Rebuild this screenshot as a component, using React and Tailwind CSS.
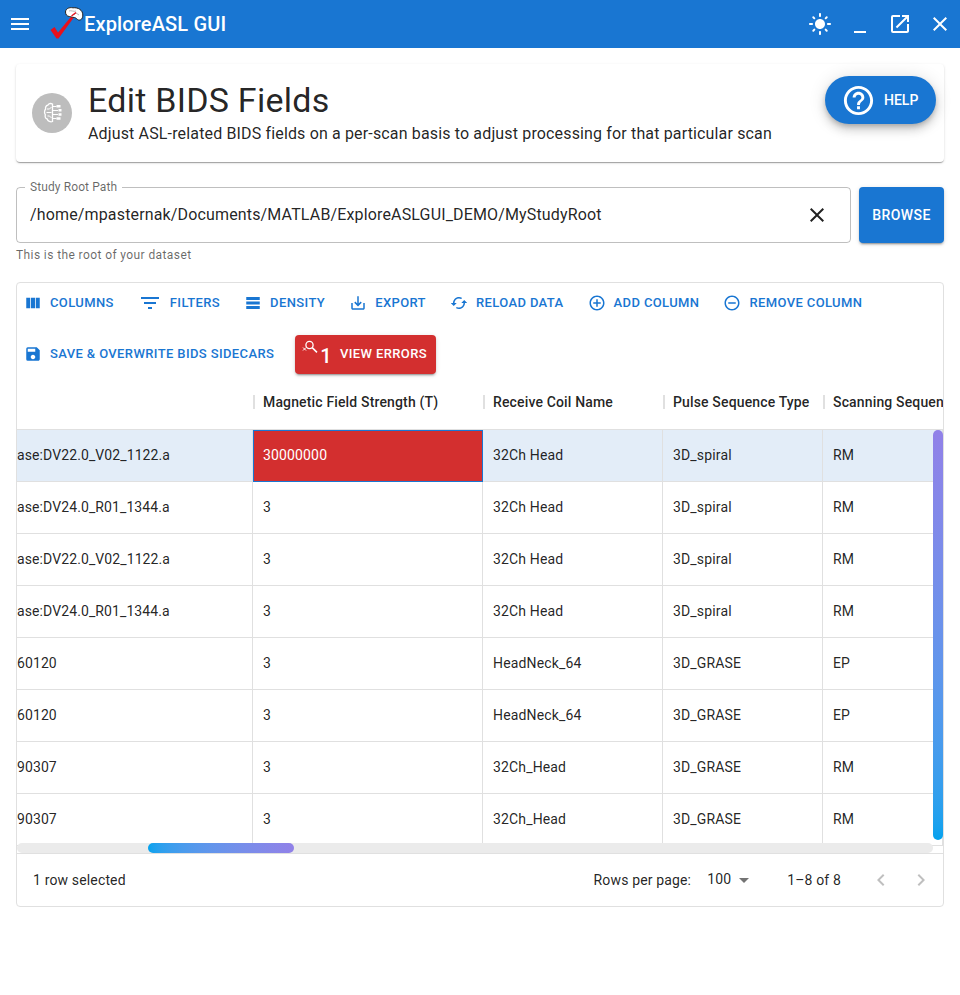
import React from "react";
import {
  MdMenu, MdLightMode, MdMinimize, MdOpenInNew, MdClose, MdHelpOutline, MdViewColumn, MdFilterList,
  MdTableRows, MdSaveAlt, MdCached, MdAddCircleOutline, MdRemoveCircleOutline, MdSave,
  MdArrowDropDown, MdChevronLeft, MdChevronRight,
} from "react-icons/md";

const rows = [
  ["ase:DV22.0_V02_1122.a", "30000000", "32Ch Head", "3D_spiral", "RM"],
  ["ase:DV24.0_R01_1344.a", "3", "32Ch Head", "3D_spiral", "RM"],
  ["ase:DV22.0_V02_1122.a", "3", "32Ch Head", "3D_spiral", "RM"],
  ["ase:DV24.0_R01_1344.a", "3", "32Ch Head", "3D_spiral", "RM"],
  ["60120", "3", "HeadNeck_64", "3D_GRASE", "EP"],
  ["60120", "3", "HeadNeck_64", "3D_GRASE", "EP"],
  ["90307", "3", "32Ch_Head", "3D_GRASE", "RM"],
  ["90307", "3", "32Ch_Head", "3D_GRASE", "RM"],
];

const headers = ["Magnetic Field Strength (T)", "Receive Coil Name", "Pulse Sequence Type", "Scanning Sequence"];

const gridCols = "grid grid-cols-[236px_230px_180px_160px_120px]";

function Logo() {
  return (
    <svg width="34" height="34" viewBox="0 0 34 34" className="ml-[18px] mt-[-2px] shrink-0">
      <path d="M0.5 24 L4.5 21 L8 26.5 L22 9.5 L24.5 10.5 L8.5 32.5 L6.5 32.5 Z" fill="#e8101c" />
      <path d="M15.5 6 C15.5 2.8 19 1 23 1.8 C28 1.2 32.8 4 32.8 9 C32.8 12.5 31 14.5 28.5 14 C27 13.5 26.5 12 24.5 11.5 C22 11.5 21 10.5 19.5 10.5 C17 10.5 15.5 8.5 15.5 6 Z" fill="#fff" stroke="#222" strokeWidth="1" />
      <path d="M19 5 C21 4 24 6 26 5 M24 9 L26 7 L29 9" fill="none" stroke="#999" strokeWidth="0.7" />
      <path d="M21.5 10 L26 6.5" stroke="#e8101c" strokeWidth="1.3" />
    </svg>
  );
}

function BrainIcon() {
  return (
    <svg width="24" height="24" viewBox="0 0 24 24" fill="none" className="ml-[1px]">
      <path d="M11.5 3 C9.5 2 7.5 2.5 6.8 4.2 C5 4.6 4.2 6.4 4.6 8 C3.2 9.6 3.2 12.4 4.4 13.8 C3.6 15.6 4.6 17.6 6.2 18 C6.8 20.2 9.5 21.4 11.5 20.5 Z" stroke="#fff" strokeWidth="1.3" />
      <path d="M6 8 H8.5 L10.5 6 M5.5 11.5 H10.5 M6.5 15 H8.5 L10.5 17" stroke="#fff" strokeWidth="1" />
      <path d="M11 5.5 H15.5 M11 9.5 H17 M11 13.5 H17 M11 17.5 H15.5" stroke="#fff" strokeWidth="1" />
      <path d="M15.5 4 h4 v2.6 h-4 z M17.5 8 h3 v2.6 h-3 z M17.5 12.2 h3 v2.6 h-3 z M15.5 16.2 h4 v2.6 h-4 z" fill="#fff" />
    </svg>
  );
}

function SearchErrorIcon() {
  return (
    <svg width="16" height="14" viewBox="0 0 16 14" fill="none" stroke="#fff" className="mt-[-15px] ml-[-1px] shrink-0">
      <circle cx="7.5" cy="5" r="3.6" strokeWidth="1.3" />
      <path d="M10.2 7.6 L15 12.4" strokeWidth="1.5" />
      <path d="M1 7.5 L4 10.5 M4 7.5 L1 10.5" strokeWidth="1" />
    </svg>
  );
}

function ToolButton({ icon, children, className = "" }) {
  return (
    <button className={`flex h-[30px] items-center gap-2 text-[13px] font-medium uppercase tracking-[0.38px] text-[#1976d2] ${className}`}>
      {icon}
      <span>{children}</span>
    </button>
  );
}

function Cell({ children, error }) {
  return (
    <div className={`flex h-[52px] items-center overflow-hidden whitespace-nowrap pb-[2px] text-sm tracking-[0.15px] ${error ? "border border-[#1976d2] bg-[#d32f2f] px-[9px] text-white" : "border-b border-r border-[#e0e0e0] px-[10px] text-black/[.87]"}`}>
      {children}
    </div>
  );
}

export default function App() {
  return (
    <div className="min-h-[995px] bg-white font-['Roboto',sans-serif] text-black/[.87]">
      <header className="flex h-12 items-center bg-[#1976d2] text-white">
        <button className="ml-2 flex h-6 w-6 items-center justify-center"><MdMenu size={24} /></button>
        <Logo />
        <h1 className="text-xl font-medium tracking-[0.15px]">ExploreASL GUI</h1>
        <div className="ml-auto flex">
          <button className="flex h-10 w-10 items-center justify-center"><MdLightMode size={24} /></button>
          <button className="flex h-10 w-10 items-center justify-center"><MdMinimize size={24} /></button>
          <button className="flex h-10 w-10 items-center justify-center"><MdOpenInNew size={24} /></button>
          <button className="flex h-10 w-10 items-center justify-center"><MdClose size={24} /></button>
        </div>
      </header>

      <main className="px-4 pt-4">
        <section className="relative flex h-[98px] items-center rounded bg-white pl-4 shadow-[0_2px_1px_-1px_rgba(0,0,0,0.2),0_1px_1px_0_rgba(0,0,0,0.14),0_1px_3px_0_rgba(0,0,0,0.12)]">
          <div className="flex h-10 w-10 items-center justify-center rounded-full bg-[#bdbdbd]"><BrainIcon /></div>
          <div className="ml-4">
            <h2 className="mb-[2px] text-[34px] leading-[40px] tracking-[0.25px]">Edit BIDS Fields</h2>
            <p className="text-base leading-[24px] tracking-[0.15px]">Adjust ASL-related BIDS fields on a per-scan basis to adjust processing for that particular scan</p>
          </div>
          <button className="absolute right-2 top-3 flex h-12 w-[111px] items-center gap-2 rounded-full bg-[#1976d2] pl-4 text-sm font-medium text-white shadow-[0_3px_5px_-1px_rgba(0,0,0,0.2),0_6px_10px_0_rgba(0,0,0,0.14),0_1px_18px_0_rgba(0,0,0,0.12)]">
            <MdHelpOutline size={35} />
            HELP
          </button>
        </section>

        <div className="mt-[25px] flex gap-2">
          <div className="relative flex h-14 flex-1 items-center rounded border border-black/25 pl-[13px] pr-[21px]">
            <span className="absolute left-2 top-[-8px] bg-white px-[5px] text-xs leading-[15px] tracking-[0.1px] text-black/60">Study Root Path</span>
            <span className="flex-1 text-base tracking-[0.15px]">/home/mpasternak/Documents/MATLAB/ExploreASLGUI_DEMO/MyStudyRoot</span>
            <MdClose size={24} />
          </div>
          <button className="h-14 w-[85px] rounded bg-[#1976d2] text-sm font-medium uppercase tracking-[0.4px] text-white shadow-[0_3px_1px_-2px_rgba(0,0,0,0.2),0_2px_2px_0_rgba(0,0,0,0.14),0_1px_5px_0_rgba(0,0,0,0.12)]">Browse</button>
        </div>
        <p className="mt-[2px] text-xs leading-[20px] tracking-[0.4px] text-black/60">This is the root of your dataset</p>

        <section className="mt-[17px] h-[625px] overflow-hidden rounded border border-[#e0e0e0]">
          <div className="flex flex-wrap items-center gap-x-6 gap-y-[17px] pl-[7px] pt-[5px]">
            <ToolButton icon={<MdViewColumn size={18} />}>Columns</ToolButton>
            <ToolButton icon={<MdFilterList size={24} />}>Filters</ToolButton>
            <ToolButton icon={<MdTableRows size={18} />}>Density</ToolButton>
            <ToolButton icon={<MdSaveAlt size={18} />}>Export</ToolButton>
            <ToolButton icon={<MdCached size={18} />}>Reload Data</ToolButton>
            <ToolButton icon={<MdAddCircleOutline size={18} />}>Add Column</ToolButton>
            <ToolButton icon={<MdRemoveCircleOutline size={18} />}>Remove Column</ToolButton>
            <ToolButton className="mb-[2px]" icon={<MdSave size={18} />}>{"Save & Overwrite BIDS Sidecars"}</ToolButton>
            <button className="ml-[-3px] flex h-[39px] w-[141px] items-center rounded bg-[#d32f2f] pl-2 text-[13px] font-medium uppercase tracking-[0.38px] text-white shadow-[0_3px_1px_-2px_rgba(0,0,0,0.2),0_2px_2px_0_rgba(0,0,0,0.14),0_1px_5px_0_rgba(0,0,0,0.12)]">
              <SearchErrorIcon />
              <span className="ml-[2px] mr-[8px] mt-[3px] text-xl font-medium leading-none">1</span>
              <span className="mb-[1px]">View Errors</span>
            </button>
          </div>

          <div className={`${gridCols} h-[56px] overflow-hidden border-b border-[#e0e0e0]`}>
            <div />
            {headers.map((h) => (
              <div key={h} className="flex items-center overflow-hidden whitespace-nowrap text-sm font-medium tracking-[0.15px]">
                <span className="h-[14px] w-[2px] shrink-0 bg-[#e0e0e0]" />
                <span className="pl-2">{h}</span>
              </div>
            ))}
          </div>

          <div className="relative h-[423px] overflow-hidden">
            {rows.map((row, r) => (
              <div key={r} className={`${gridCols} ${r === 0 ? "bg-[#e3edf8]" : ""}`}>
                <div className="flex h-[52px] items-center overflow-hidden whitespace-nowrap border-b border-r border-[#e0e0e0] pb-[2px] text-sm tracking-[0.1px]">{row[0]}</div>
                <Cell error={r === 0}>{row[1]}</Cell>
                <Cell>{row[2]}</Cell>
                <Cell>{row[3]}</Cell>
                <Cell>{row[4]}</Cell>
              </div>
            ))}
            <div className="absolute right-0 top-0 h-[410px] w-[10px] rounded-full bg-gradient-to-b from-[#9181e8] to-[#00a2ee]" />
            <div className="absolute bottom-0 left-0 h-[10px] w-[916px] rounded-full bg-[#ebebeb]">
              <div className="ml-[131px] h-[10px] w-[146px] rounded-full bg-gradient-to-r from-[#00a2ee] to-[#9181e8]" />
            </div>
          </div>

          <div className="flex h-[53px] items-center border-t border-[#e0e0e0] pl-4 text-sm tracking-[0.15px]">
            <span>1 row selected</span>
            <span className="ml-auto mr-[1px]">Rows per page:</span>
            <span className="ml-[15px] flex items-center"><span className="mb-[2px] mr-[1px]">100</span><MdArrowDropDown size={24} className="text-black/55" /></span>
            <span className="ml-[31px]">1–8 of 8</span>
            <MdChevronLeft size={24} className="ml-[28px] text-black/25" />
            <MdChevronRight size={24} className="ml-[16px] mr-[10px] text-black/25" />
          </div>
        </section>
      </main>
    </div>
  );
}
